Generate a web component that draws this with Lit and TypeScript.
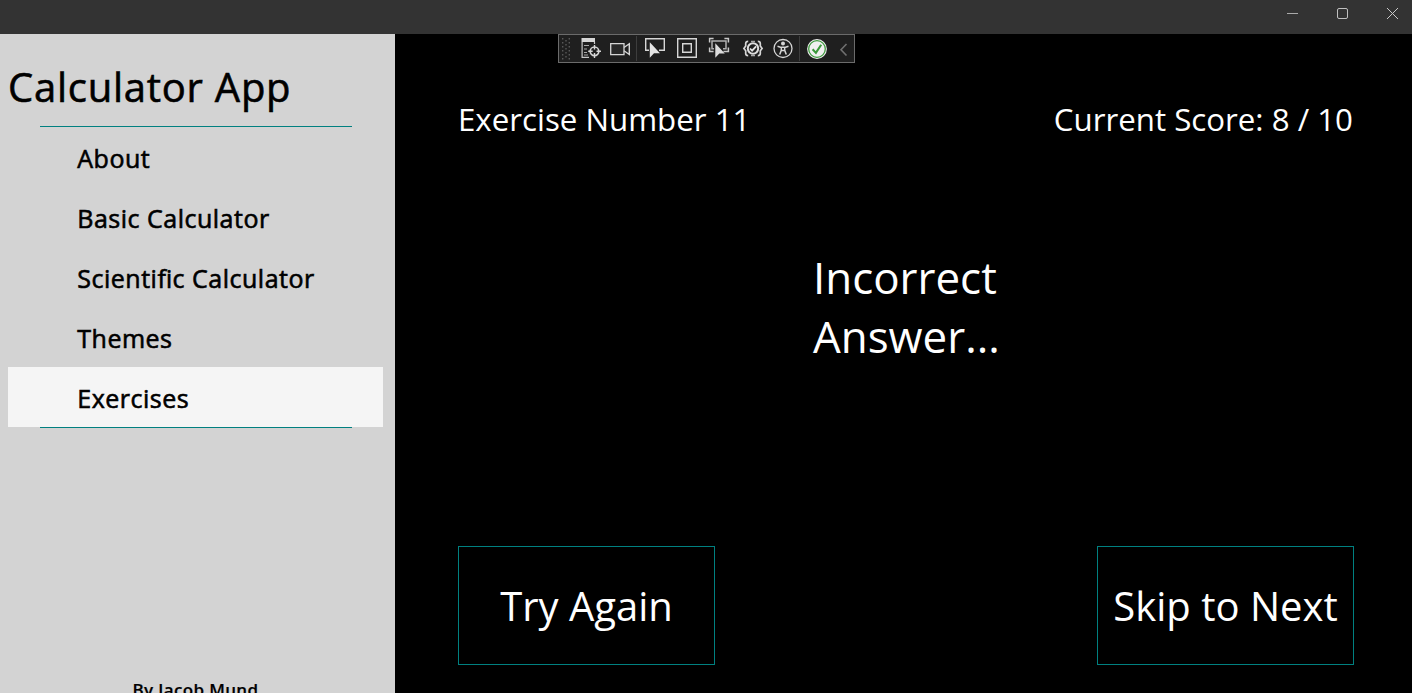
import { LitElement, html, css, svg } from "lit";
import { customElement, property, state } from "lit/decorators.js";
import { classMap } from "lit/directives/class-map.js";

const glyphs: Record<string, unknown> = {
  tree: svg`<path d="M.5 0h13.500v4H.5z" fill="#d6d6d6"/><path d="M1.100 4v15.300H8M13.500 4v2" fill="none" stroke="#c8c8c8" stroke-width="1.200"/><path d="M3 7.500h5M3 11h3M3 14.500h3M3 17h4" stroke="#a8a8a8" fill="none"/><circle cx="13.500" cy="13.300" r="4.300" fill="#1f1f1f" stroke="#d6d6d6" stroke-width="1.700"/><path d="M13.500 7v4.500M13.500 15v5M7.200 13.300h4.500M15.500 13.300h4.500" stroke="#d6d6d6" stroke-width="1.400"/>`,
  camera: svg`<path d="M.7 5.700h13.300v10.900H.7z" fill="#292929" stroke="#d6d6d6" stroke-width="1.300"/><path d="M14 9.500L19.300 5.800v10.700L14 12.800" fill="none" stroke="#d6d6d6" stroke-width="1.400"/>`,
  pick: svg`<path d="M4 12.300H.7V.7h18.600v11.600H14" fill="none" stroke="#d6d6d6" stroke-width="1.400"/><path d="M4.800 4.300v15.500l4.200-4.500h6z" fill="#e4e4e4"/>`,
  adorn: svg`<path d="M.7.7h18.600v18.600H.7zM5.700 5.700h8.600v8.600H5.700z" fill="none" stroke="#d6d6d6" stroke-width="1.400"/>`,
  track: svg`<path d="M.6 4.500V.6h4M15.400.6h4v3.900M.6 9.500v4h4M19.400 9.500v4h-5" fill="none" stroke="#c8c8c8" stroke-width="1.500"/><path d="M5 10.700H3V3h14v7.700h-3" fill="none" stroke="#b0b0b0" stroke-width="1.500"/><path d="M6.300 5.300v14.500l4-4.300h5.500z" fill="#dcdcdc"/>`,
  reload: svg`<path d="M5.200 3.300Q2.700 3.300 2.700 5.500v2.500L.9 10.500l1.800 2.300v2.700Q2.700 17.700 5.200 17.700M14.800 3.300q2.500 0 2.500 2.200v2.500l1.800 2.500-1.800 2.300v2.700q0 2.200-2.500 2.200" fill="none" stroke="#d6d6d6" stroke-width="1.700"/><circle cx="10" cy="10.500" r="5.200" fill="none" stroke="#dedede" stroke-width="2"/><path d="M8 3.600h4M8 17.400h4" stroke="#a8a8a8" stroke-width="1.500"/><path d="M7 10.500l2.100 2.200 4-4.400" fill="none" stroke="#e4e4e4" stroke-width="1.800"/>`,
  access: svg`<circle cx="10" cy="10.500" r="9" fill="none" stroke="#d6d6d6" stroke-width="1.300"/><circle cx="10" cy="5.600" r="2" fill="#d6d6d6"/><path d="M4.500 8.300L8.300 9.500v2.800L6.700 16.500M15.500 8.300l-3.800 1.200v2.800l1.600 4.200M8.300 9.300h3.400M8.500 12.500h3" fill="none" stroke="#d6d6d6" stroke-width="1.500"/>`,
  ok: svg`<circle cx="10" cy="11" r="9.900" fill="#f0f0f0"/><circle cx="10" cy="11" r="8.300" fill="#f0f0f0" stroke="#3f9a3f" stroke-width="1.300"/><path d="M5.600 11.300l3.300 3.600 5.300-8.200" fill="none" stroke="#3a983a" stroke-width="2.100"/>`,
  chevron: svg`<path d="M10.500 6L5 11.700l5.500 5.800" fill="none" stroke="#707070" stroke-width="1.600"/>`,
};

@customElement("debug-toolbar")
export class DebugToolbar extends LitElement {
  static styles = css`
    :host { display: flex; box-sizing: border-box; width: 297px; height: 29px; border: 1px solid #6b6b6b; background: #1f1f1f; padding-left: 3px; }
    svg { display: block; flex: none; overflow: visible; margin-top: 3px; }
    .grip { width: 10px; height: 23px; margin: 3px 9px 0 0; }
    .sep { width: 1px; height: 25px; margin: 1px 0 0; background: #3d3d3d; flex: none; }
    .g0 { margin-left: 0; } .g4 { margin-left: 6px; } .g8 { margin-left: 8px; }
    .g9 { margin-left: 9px; } .g10 { margin-left: 10px; } .g12 { margin-left: 12px; } .g14 { margin-left: 14px; } .g7 { margin-left: 7px; }
  `;
  private icon(name: string, gap: string) {
    return html`<svg class=${gap} width="20" height="20" viewBox="0 0 20 20">${glyphs[name]}</svg>`;
  }
  render() {
    const dots = [];
    for (let r = 0; r < 6; r++) {
      const y = r * 4;
      dots.push(svg`<path d="M0 ${y}h1.400v1.400H0zM6.600 ${y}h1.400v1.400H6.600z" fill="#585858"/>`);
      if (r < 5) dots.push(svg`<path d="M3.300 ${y + 2}h1.400v1.400H3.300z" fill="#585858"/>`);
    }
    return html`
      <svg class="grip">${dots}</svg>
      ${this.icon("tree", "g0")}${this.icon("camera", "g9")}
      <span class="sep g4"></span>
      ${this.icon("pick", "g8")}${this.icon("adorn", "g12")}${this.icon("track", "g12")}
      ${this.icon("reload", "g14")}${this.icon("access", "g10")}
      <span class="sep g4"></span>
      ${this.icon("ok", "g7")}${this.icon("chevron", "g9")}`;
  }
}

@customElement("side-nav")
export class SideNav extends LitElement {
  @property({ type: Array }) items: string[] = [];
  @state() private selected = "Exercises";
  static styles = css`
    :host { display: flex; flex-direction: column; box-sizing: border-box; width: 395px; height: 659px; overflow: hidden; background: #d3d3d3; color: #000; padding: 0 12px 0 8px; flex: none; }
    .title { font-size: 40px; line-height: 54px; font-weight: 400; margin: 26px 0 12px; white-space: nowrap; letter-spacing: .75px; -webkit-text-stroke: .6px #000; }
    .rule { height: 1px; background: #008080; margin: 0 31px 0 32px; flex: none; }
    .list { display: flex; flex-direction: column; }
    .item { height: 60px; padding: 2px 0 0 69.300px; box-sizing: border-box; display: flex; align-items: center; font: 400 25px "Open Sans", sans-serif; letter-spacing: .5px; font-feature-settings: "liga" 1; -webkit-text-stroke: .6px #000; text-align: left; border: 0; background: none; color: inherit; }
    .item.on { background: #f5f5f5; }
    .by { margin: auto 0 -9px; height: 24px; line-height: 24px; font-size: 17px; letter-spacing: .35px; font-weight: 600; text-align: center; white-space: nowrap; -webkit-text-stroke: .2px #000; }
  `;
  render() {
    return html`
      <h1 class="title">Calculator App</h1>
      <div class="rule"></div>
      <nav class="list">
        ${this.items.map(
          (i) => html`<button class=${classMap({ item: true, on: i === this.selected })} @click=${() => (this.selected = i)}>${i}</button>`
        )}
      </nav>
      <div class="rule"></div>
      <div class="by">By Jacob Mund</div>`;
  }
}

@customElement("app-root")
export class AppRoot extends LitElement {
  static styles = css`
    :host { display: flex; flex-direction: column; position: relative; width: 1412px; height: 693px; overflow: hidden; background: #000; color: #fff; font-family: "Open Sans", sans-serif; }
    .bar { height: 34px; flex: none; background: #333; display: flex; justify-content: flex-end; }
    .win { width: 50px; height: 27px; display: flex; align-items: center; justify-content: center; }
    .win.last { margin-right: -5px; }
    .body { display: flex; flex: 1; }
    .tools { position: absolute; left: 558px; top: 34px; }
    .main { flex: 1; display: flex; flex-direction: column; box-sizing: border-box; padding: 63px 58px 28px 63px; }
    .row { display: flex; justify-content: space-between; font-size: 31.250px; line-height: 44px; white-space: nowrap; }
    .score { padding-right: 1px; }
    .answer { margin: 107px auto auto; width: 186px; font-size: 43.900px; line-height: 59px; white-space: nowrap; }
    .act { width: 257px; height: 119px; box-sizing: border-box; border: 1px solid #008080; background: #000; color: #fff; font: 400 40px "Open Sans", sans-serif; padding: 0; }
  `;
  render() {
    return html`
      <header class="bar">
        <span class="win"><svg width="11" height="11"><path d="M0 5.500h11" stroke="#aaa" /></svg></span>
        <span class="win"><svg width="11" height="11"><rect x=".5" y=".5" width="10" height="10" rx="1.500" fill="none" stroke="#c0c0c0" /></svg></span>
        <span class="win last"><svg width="11" height="11"><path d="M0 0l11 11M11 0L0 11" stroke="#c8c8c8" /></svg></span>
      </header>
      <div class="body">
        <side-nav .items=${["About", "Basic Calculator", "Scientific Calculator", "Themes", "Exercises"]}></side-nav>
        <main class="main">
          <div class="row"><span>Exercise Number 11</span><span class="score">Current Score: 8 / 10</span></div>
          <div class="answer">Incorrect<br />Answer...</div>
          <div class="row"><button class="act">Try Again</button><button class="act">Skip to Next</button></div>
        </main>
      </div>
      <debug-toolbar class="tools"></debug-toolbar>`;
  }
}
